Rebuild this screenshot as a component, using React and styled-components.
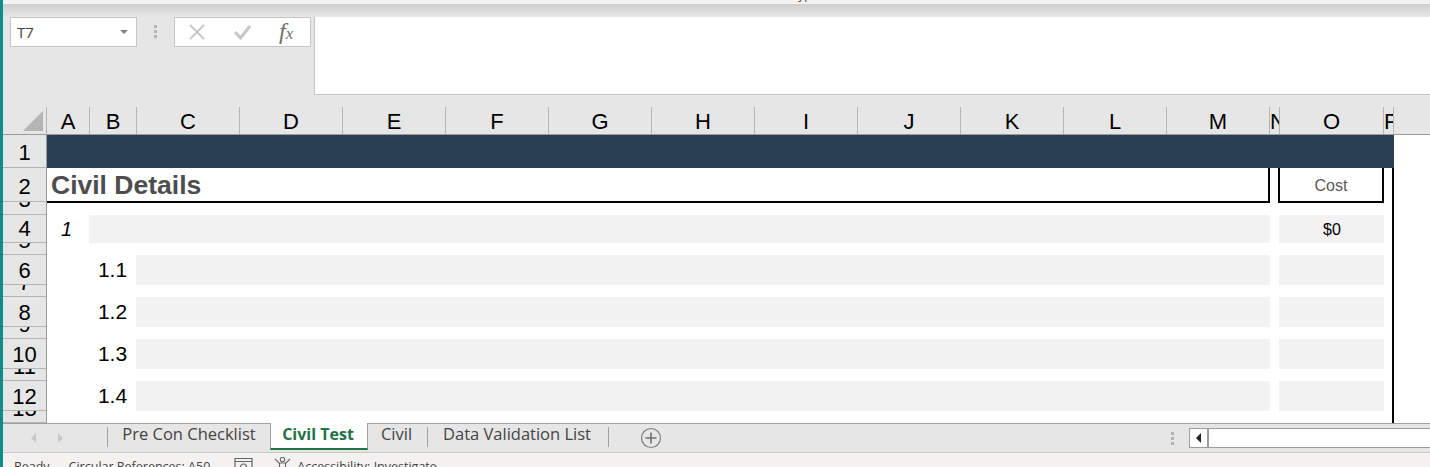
import styled, { createGlobalStyle } from "styled-components";

const GlobalStyle = createGlobalStyle`
  html, body {
    margin: 0;
    padding: 0;
    overflow: hidden;
    background: #fff;
  }
  * { box-sizing: border-box; }
`;

const UI_FONT = `"Open Sans", "Noto Sans", sans-serif`;
const CELL_FONT = `"Liberation Sans", Arial, sans-serif`;

const HEADER_COLS = [
  ["A", 43], ["B", 47], ["C", 103], ["D", 103], ["E", 103], ["F", 103], ["G", 103], ["H", 103],
  ["I", 103], ["J", 103], ["K", 103], ["L", 103], ["M", 103], ["N", 10], ["O", 104], ["P", 10],
];
const ROWS = [33, 34, 13, 28, 12, 30, 12, 30, 12, 30, 12, 30, 12];
const DETAIL_ROWS = [
  ["1.1", 6],
  ["1.2", 8],
  ["1.3", 10],
  ["1.4", 12],
];

const Page = styled.div`
  width: 1430px;
  height: 467px;
  overflow: hidden;
  display: flex;
  flex-direction: column;
  border-left: 3px solid #0e8b8b;
  background: #e6e6e6;
`;

const TitleStrip = styled.div`
  height: 4px;
  flex: none;
  overflow: hidden;
  background: #f3f2f1;
  display: flex;
  justify-content: center;
  font: 12px/12px ${UI_FONT};
  color: #444;
`;

const TitleText = styled.span`
  margin-top: -11px;
  margin-left: 170px;
`;

const RibbonShadow = styled.div`
  height: 13px;
  flex: none;
  background: linear-gradient(#cfcfcf, #e6e6e6);
`;

const FormulaBar = styled.div`
  height: 90px;
  flex: none;
  display: flex;
  align-items: flex-start;
  padding-left: 7px;
`;

const NameBox = styled.div`
  width: 127px;
  height: 30px;
  background: #fff;
  border: 1px solid #c6c6c6;
  display: flex;
  align-items: center;
  justify-content: space-between;
  padding: 0 8px 0 6px;
  font: 15px ${UI_FONT};
  color: #444;
`;

const DropArrow = styled.span`
  width: 0;
  height: 0;
  border-left: 4px solid transparent;
  border-right: 4px solid transparent;
  border-top: 4px solid #808080;
`;

const Grip = styled.div`
  width: 3px;
  margin: ${(p) => p.$margin};
  display: flex;
  flex-direction: column;
  gap: 2px;
  flex: none;
  & > i {
    display: block;
    width: 3px;
    height: 3px;
    background: #b4b4b4;
  }
`;

const FxBox = styled.div`
  width: 137px;
  height: 30px;
  background: #fff;
  border: 1px solid #c6c6c6;
  display: flex;
  align-items: center;
  gap: 28px;
  padding-left: 14px;
`;

const FxText = styled.span`
  font: italic 24px/26px "Liberation Serif", serif;
  color: #707070;
  & > small {
    font-size: 17px;
  }
`;

const FormulaInput = styled.div`
  width: 1116px;
  height: 78px;
  margin-left: 3px;
  background: #fff;
  border: 1px solid #c6c6c6;
  border-right: none;
  border-top: none;
`;

const HeaderRow = styled.div`
  height: 28px;
  flex: none;
  display: flex;
  border-bottom: 1px solid #9c9c9c;
`;

const Corner = styled.div`
  width: 44px;
  flex: none;
  border-right: 1px solid #b4b4b4;
  display: flex;
  align-items: flex-end;
  justify-content: flex-end;
  padding: 0 3px 3px 0;
`;

const ColHead = styled.div`
  width: ${(p) => p.$w}px;
  flex: none;
  overflow: hidden;
  display: flex;
  align-items: center;
  justify-content: ${(p) => (p.$narrow ? "flex-start" : "center")};
  padding-top: 2px;
  border-right: 1px solid #b4b4b4;
  font: 22px ${CELL_FONT};
  color: #000;
`;

const SheetBody = styled.div`
  height: 288px;
  flex: none;
  display: flex;
`;

const RowHeads = styled.div`
  width: 44px;
  flex: none;
  display: flex;
  flex-direction: column;
  border-right: 1px solid #9c9c9c;
`;

// short rows only show the foot of their number, as in the sheet
const RowHead = styled.div`
  height: ${(p) => p.$h}px;
  flex: none;
  overflow: hidden;
  display: flex;
  align-items: ${(p) => (p.$h < 20 ? "flex-end" : "center")};
  justify-content: center;
  padding-bottom: ${(p) => (p.$h < 20 ? p.$h - 11 : 0)}px;
  padding-top: ${(p) => (p.$h > 30 ? 4 : p.$h === 30 ? 2 : 0)}px;
  border-bottom: 1px solid #b4b4b4;
  font: 22px/24px ${CELL_FONT};
  color: #000;
`;

const Cells = styled.div`
  flex: 1;
  background: #fff;
  display: grid;
  grid-template-columns: 42px 47px repeat(10, 103px) 104px 9px 105px 10px 36px;
  grid-template-rows: ${ROWS.map((h) => `${h}px`).join(" ")};
`;

const Banner = styled.div`
  grid-column: 1 / 17;
  grid-row: 1;
  background: #2a3f54;
`;

const TitleCell = styled.div`
  grid-column: 1 / 14;
  grid-row: 2;
  height: 35px;
  border-right: 2px solid #000;
  border-bottom: 2px solid #000;
  display: flex;
  align-items: center;
  padding: 2px 0 0 4px;
  font: bold 26.5px ${CELL_FONT};
  color: #4d4d4d;
`;

const CostCell = styled.div`
  grid-column: 15;
  grid-row: 2;
  height: 35px;
  margin-left: -1px;
  border: 2px solid #000;
  border-top: none;
  display: flex;
  align-items: center;
  justify-content: center;
  padding-top: 2px;
  font: 16px ${CELL_FONT};
  color: #595959;
`;

const RightEdge = styled.div`
  grid-column: 16;
  grid-row: 2 / 14;
  border-right: 2px solid #000;
`;

const Label = styled.div`
  grid-column: ${(p) => p.$col};
  grid-row: ${(p) => p.$row};
  display: flex;
  align-items: center;
  justify-content: center;
  font: ${(p) => (p.$italic ? "italic 20px" : "21px")} ${CELL_FONT};
  padding-right: ${(p) => (p.$italic ? "3px" : "0")};
  color: #000;
`;

const Shaded = styled.div`
  grid-column: ${(p) => p.$col};
  grid-row: ${(p) => p.$row};
  background: #f2f2f2;
  display: flex;
  align-items: center;
  justify-content: center;
  padding: 2px 0 0 1px;
  font: 16px ${CELL_FONT};
  color: #000;
`;

const TabBar = styled.div`
  height: 30px;
  flex: none;
  display: flex;
  align-items: flex-start;
  border-top: 1px solid #a0a0a0;
  border-bottom: 1px solid #c8c8c8;
  font: 16.5px ${UI_FONT};
  color: #444;
`;

const TabArrows = styled.div`
  width: 104px;
  height: 28px;
  flex: none;
  display: flex;
  align-items: center;
  gap: 22px;
  padding-left: 28px;
`;

const Arrow = styled.span`
  width: 0;
  height: 0;
  border-top: 5px solid transparent;
  border-bottom: 5px solid transparent;
  ${(p) => (p.$right ? "border-left" : "border-right")}: 5px solid #c8c8c8;
`;

const Sep = styled.span`
  width: 1px;
  height: 20px;
  margin-top: 3px;
  background: #a0a0a0;
  flex: none;
`;

const Tab = styled.div`
  width: ${(p) => p.$w}px;
  height: ${(p) => (p.$active ? "27px" : "18px")};
  flex: none;
  display: flex;
  justify-content: center;
  align-items: center;
  white-space: nowrap;
  padding-right: ${(p) => p.$nudge || 0}px;
  ${(p) =>
    p.$active &&
    `
    background: #fff;
    color: #217346;
    font-size: 16px;
    font-weight: 700;
    border-left: 1px solid #a0a0a0;
    border-right: 1px solid #a0a0a0;
    border-bottom: 2px solid #217346;
    margin-top: -1px;
    padding-bottom: 4px;
  `}
`;

const AddSheet = styled.svg`
  width: 22px;
  height: 22px;
  margin: 3px 0 0 31px;
  flex: none;
`;

const ScrollZone = styled.div`
  margin-left: auto;
  width: 259px;
  height: 28px;
  flex: none;
  display: flex;
  align-items: center;
`;

const ScrollTrack = styled.div`
  margin-left: 15px;
  flex: 1;
  height: 20px;
  background: #fff;
  border: 1px solid #9c9c9c;
  border-right: none;
  display: flex;
`;

const ScrollBtn = styled.div`
  width: 19px;
  border-right: 2px solid #9c9c9c;
  display: flex;
  align-items: center;
  justify-content: center;
  &::before {
    content: "";
    border-top: 5px solid transparent;
    border-bottom: 5px solid transparent;
    border-right: 5px solid #222;
  }
`;

const StatusBar = styled.div`
  flex: 1;
  background: #f3f2f1;
  display: flex;
  align-items: flex-start;
  padding-left: 11px;
  font: 12.5px/17px ${UI_FONT};
  color: #444;
  white-space: nowrap;
  overflow: hidden;
`;

const StatusItem = styled.span`
  margin: 5px 0 0 ${(p) => p.$gap}px;
`;

const StatusIcon = styled.svg`
  width: 19px;
  height: 14px;
  margin: 4px 0 0 ${(p) => p.$gap}px;
  flex: none;
`;

export default function App() {
  return (
    <>
      <GlobalStyle />
      <Page>
        <TitleStrip>
          <TitleText>Typ</TitleText>
        </TitleStrip>
        <RibbonShadow />
        <FormulaBar>
          <NameBox>
            T7
            <DropArrow />
          </NameBox>
          <Grip $margin="8px 17px 0 17px">
            <i />
            <i />
            <i />
          </Grip>
          <FxBox>
            <svg width="17" height="16" viewBox="0 0 17 16">
              <path d="M1 1 L15 15 M15 1 L1 15" stroke="#c8c8c8" strokeWidth="2" fill="none" />
            </svg>
            <svg width="17" height="16" viewBox="0 0 17 16">
              <path d="M1 8 L6.5 14 L16 2" stroke="#c8c8c8" strokeWidth="3.2" fill="none" />
            </svg>
            <FxText>
              f<small>x</small>
            </FxText>
          </FxBox>
          <FormulaInput />
        </FormulaBar>

        <HeaderRow>
          <Corner>
            <svg width="20" height="20" viewBox="0 0 20 20">
              <path d="M20 0 V20 H0 Z" fill="#b4b4b4" />
            </svg>
          </Corner>
          {HEADER_COLS.map(([name, w]) => (
            <ColHead key={name} $w={w} $narrow={w < 20}>
              {name}
            </ColHead>
          ))}
        </HeaderRow>

        <SheetBody>
          <RowHeads>
            {ROWS.map((h, i) => (
              <RowHead key={i} $h={h}>
                {i + 1}
              </RowHead>
            ))}
          </RowHeads>
          <Cells>
            <Banner />
            <TitleCell>Civil Details</TitleCell>
            <CostCell>Cost</CostCell>
            <RightEdge />

            <Label $col={1} $row={4} $italic>
              1
            </Label>
            <Shaded $col="2 / 14" $row={4} />
            <Shaded $col={15} $row={4}>
              $0
            </Shaded>

            {DETAIL_ROWS.map(([num, row]) => [
              <Label key={num} $col={2} $row={row}>
                {num}
              </Label>,
              <Shaded key={num + "a"} $col="3 / 14" $row={row} />,
              <Shaded key={num + "b"} $col={15} $row={row} />,
            ])}
          </Cells>
        </SheetBody>

        <TabBar>
          <TabArrows>
            <Arrow />
            <Arrow $right />
          </TabArrows>
          <Sep />
          <Tab $w={162}>Pre Con Checklist</Tab>
          <Tab $w={98} $active $nudge={2}>
            Civil Test
          </Tab>
          <Tab $w={59} $nudge={2}>
            Civil
          </Tab>
          <Sep />
          <Tab $w={180} $nudge={2}>
            Data Validation List
          </Tab>
          <Sep />
          <AddSheet viewBox="0 0 22 22">
            <circle cx="11" cy="11" r="9.5" fill="none" stroke="#808080" strokeWidth="1.2" />
            <path d="M11 5.5 V16.5 M5.5 11 H16.5" stroke="#707070" strokeWidth="1.6" />
          </AddSheet>
          <ScrollZone>
            <Grip $margin="0">
              <i />
              <i />
              <i />
            </Grip>
            <ScrollTrack>
              <ScrollBtn />
            </ScrollTrack>
          </ScrollZone>
        </TabBar>

        <StatusBar>
          <StatusItem $gap={0}>Ready</StatusItem>
          <StatusItem $gap={19}>Circular References: A50</StatusItem>
          <StatusIcon $gap={24} viewBox="0 0 19 14">
            <path d="M1 1.5 H18 V13 H1 Z M1 4.5 H18" fill="none" stroke="#666" strokeWidth="1.2" />
            <circle cx="9.5" cy="10" r="3" fill="none" stroke="#666" strokeWidth="1.2" />
          </StatusIcon>
          <StatusIcon $gap={21} viewBox="0 0 19 14">
            <circle cx="8.5" cy="2.5" r="2.2" fill="none" stroke="#666" strokeWidth="1.1" />
            <path d="M1 2 L5 6 H12 L16 2 M5.5 6 V13 M11.5 6 V13" fill="none" stroke="#666" strokeWidth="1.1" />
          </StatusIcon>
          <StatusItem $gap={4}>Accessibility: Investigate</StatusItem>
        </StatusBar>
      </Page>
    </>
  );
}
